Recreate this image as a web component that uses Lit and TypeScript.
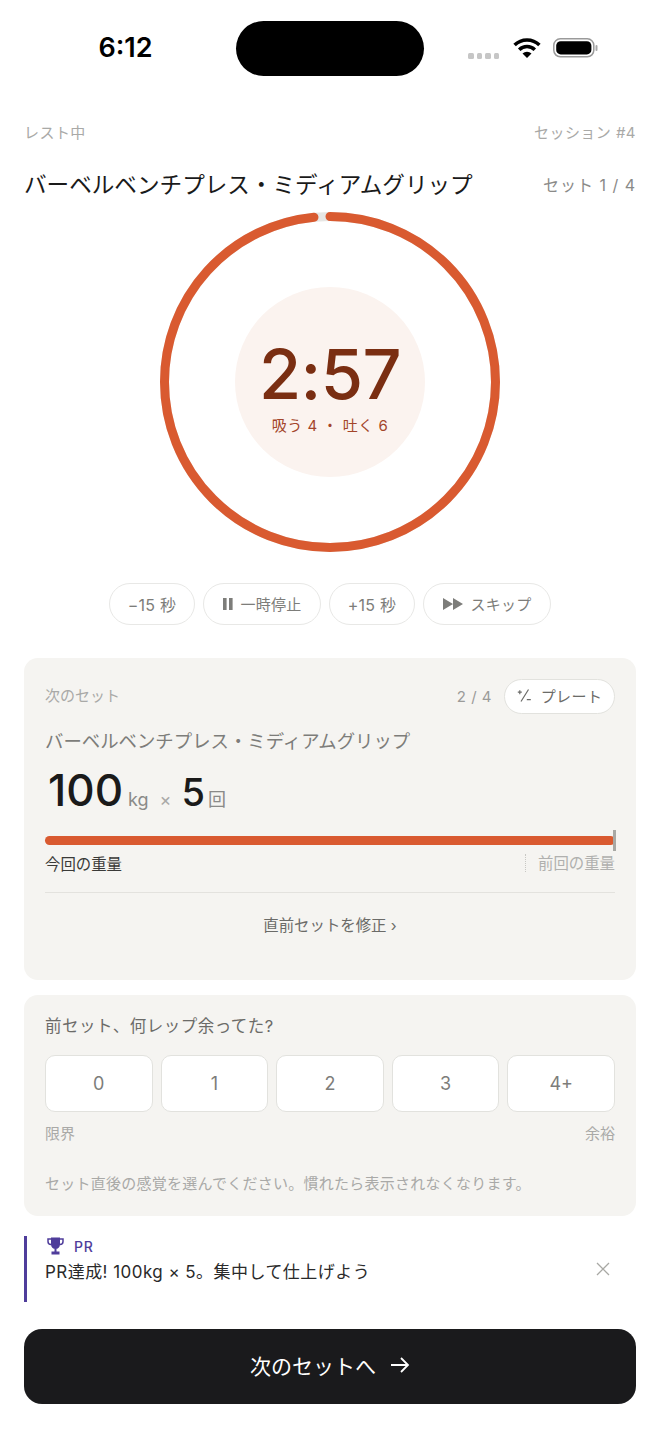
import { LitElement, html, css } from "lit";
import { customElement } from "lit/decorators.js";

@customElement("app-root")
export class AppRoot extends LitElement {
  static styles = css`
    :host {
      display: block;
      width: 660px;
      height: 1434px;
      background: #fff;
      overflow: hidden;
      font-family: Inter, "Noto Sans CJK JP", sans-serif;
      color: #1a1a1a;
    }
    * { box-sizing: border-box; }
    .status { position: relative; height: 114px; display: flex; align-items: flex-start; }
    .time { width: 251px; padding-top: 33px; text-align: center; font-size: 27px; line-height: 30px; font-weight: 600; color: #000; }
    .island { position: absolute; left: 236px; top: 21px; width: 188px; height: 55px; border-radius: 28px; background: #000; }
    .sys { position: absolute; left: 468px; top: 38px; display: flex; align-items: flex-start; }
    .dots { display: flex; gap: 3px; margin-top: 15px; margin-right: 14px; }
    .dots i { width: 5.5px; height: 5.5px; border-radius: 1.5px; background: #c6c6c6; }
    .wifi { margin-right: 12px; }
    .page { padding: 0 24px; }
    .row { display: flex; justify-content: space-between; align-items: center; }
    .top { height: 30px; font-size: 15px; color: #a9a9a7; padding-top: 5px; letter-spacing: .45px; }
    .titlerow { height: 30px; margin-top: 25px; }
    .title { font-size: 22.6px; line-height: 30px; padding-top: 1px; color: #1a1a1a; font-weight: 400; }
    .setno { font-size: 16px; color: #8a8a88; letter-spacing: 1px; }
    .ringwrap { position: relative; width: 340px; height: 340px; margin: 13px auto 0; }
    .ringwrap svg { display: block; }
    .center { position: absolute; left: 75px; top: 75px; width: 190px; height: 190px; border-radius: 50%; background: #fbf3ef; display: flex; flex-direction: column; align-items: center; }
    .clock { margin-top: 50px; font-size: 68.5px; letter-spacing: -.6px; line-height: 76px; font-weight: 450; color: #7a2e12; }
    .breath { font-size: 15px; line-height: 20px; margin-top: 3px; color: #a3452a; letter-spacing: 0.5px; white-space: pre; }
    .controls { display: flex; justify-content: center; gap: 8px; margin-top: 31px; }
    .pill { height: 42px; padding-bottom: 1px; border: 1px solid #e8e8e6; border-radius: 21px; background: #fff; display: flex; align-items: center; justify-content: center; gap: 8px; font-size: 15px; color: #7d7d7a; letter-spacing: .2px; }
    .wide { font-size: 16px; letter-spacing: .2px; }
    .card { background: #f5f4f1; border-radius: 14px; padding: 20px 21px 21px; }
    .c1 { margin-top: 33px; height: 322px; }
    .c2 { margin-top: 15px; height: 221px; }
    .cardhead { height: 36px; }
    .lbl { font-size: 15px; color: #a9a9a7; padding-bottom: 3px; }
    .headr { display: flex; align-items: center; gap: 12px; font-size: 15px; color: #9b9b99; letter-spacing: .5px; }
    .plate { width: 111px; height: 35px; padding-bottom: 2px; background: #fff; border: 1px solid #e2e2de; border-radius: 18px; display: flex; align-items: center; justify-content: center; gap: 9px; font-size: 15px; color: #6b6b68; letter-spacing: .4px; }
    .exname { margin-top: 13px; font-size: 18.4px; line-height: 28px; color: #7d7d7a; }
    .big { display: flex; align-items: baseline; margin-top: 8px; height: 54px; padding-left: 3px; }
    .n1 { font-size: 44px; line-height: 54px; font-weight: 450; color: #1a1a1a; }
    .n2 { font-size: 38px; line-height: 54px; font-weight: 450; color: #1a1a1a; }
    .u { font-size: 18px; color: #8a8a88; margin-left: 5px; }
    .n2 + .u { margin-left: 3px; }
    .x { font-size: 18px; color: #a9a9a7; margin: 0 10px 0 11px; }
    .barwrap { position: relative; height: 9px; margin-top: 19px; background: #d95a30; border-radius: 5px; }
    .tick { position: absolute; right: -1px; top: -6px; width: 3px; height: 21px; background: #a8a8a4; }
    .barlbl { margin-top: 6px; height: 24px; font-size: 15.4px; }
    .cur { color: #3a3a38; }
    .prev { color: #b0b0ae; border-left: 1px dotted #c8c8c4; padding-left: 12px; padding-top: 2px; line-height: 16px; }
    .div { height: 1px; background: #e3e2de; margin-top: 17px; }
    .fix { margin-top: 21px; text-align: center; font-size: 15.4px; line-height: 24px; color: #6b6b68; }
    .q { font-size: 16.5px; letter-spacing: .5px; line-height: 22px; color: #6b6b68; }
    .opts { display: grid; grid-template-columns: repeat(5, 1fr); gap: 8px; margin-top: 18px; }
    .opt { height: 57px; background: #fff; border: 1px solid #e2e2de; border-radius: 10px; display: flex; align-items: center; justify-content: center; font-size: 18px; color: #7d7d7a; }
    .ends { margin-top: 12px; font-size: 15px; line-height: 20px; color: #a9a9a7; }
    .hint { margin-top: 30px; font-size: 15px; letter-spacing: .25px; line-height: 20px; color: #a9a9a7; white-space: nowrap; }
    .alert { position: relative; margin-top: 20px; height: 66px; border-left: 3px solid #4f3d9b; padding-left: 18px; }
    .prhead { display: flex; align-items: center; gap: 10px; height: 20px; font-size: 14px; font-weight: 500; color: #4f3d9b; letter-spacing: .8px; }
    .prhead svg { margin-left: 2px; }
    .msg { font-size: 17px; letter-spacing: .45px; line-height: 25px; margin-top: 4px; color: #2a2a2a; }
    .close { position: absolute; right: 25px; top: 25px; }
    .cta { margin-top: 27px; height: 75px; padding-bottom: 3px; background: #1a1a1c; border-radius: 18px; display: flex; align-items: center; justify-content: center; gap: 14px; color: #fff; font-size: 21px; }
  `;

  render() {
    const r = 165.5, c = 2 * Math.PI * r;
    return html`
      <div class="status">
        <div class="time">6:12</div>
        <div class="island"></div>
        <div class="sys">
          <div class="dots"><i></i><i></i><i></i><i></i></div>
          <svg class="wifi" width="28" height="20" viewBox="0 0 28 20"><path d="M14 20L9.500 15.500A6.400 6.400 0 0 1 18.500 15.500z" fill="#000"/><path d="M6.200 11.700A11 11 0 0 1 21.800 11.700M1.600 7.100A17.500 17.500 0 0 1 26.400 7.100" fill="none" stroke="#000" stroke-width="3.500"/></svg>
          <svg width="45" height="20" viewBox="0 0 45 20"><rect x="0.800" y="0.800" width="40" height="18" rx="6.500" fill="none" stroke="#9a9a9a" stroke-width="1.500"/><rect x="3.200" y="3.200" width="35.200" height="13.200" rx="4.500" fill="#000"/><rect x="42.500" y="7" width="2" height="6" rx="1" fill="#a8a8a8"/></svg>
        </div>
      </div>
      <div class="page">
        <div class="row top"><span>レスト中</span><span>セッション #4</span></div>
        <div class="row titlerow"><span class="title">バーベルベンチプレス・ミディアムグリップ</span><span class="setno">セット 1 / 4</span></div>
        <div class="ringwrap">
          <svg width="340" height="340" viewBox="0 0 340 340">
            <circle cx="170" cy="170" r="${r}" fill="none" stroke="#e6e6e4" stroke-width="9"/>
            <circle cx="170" cy="170" r="${r}" fill="none" stroke="#d95a30" stroke-width="9" stroke-linecap="round"
              stroke-dasharray="${c - 16.5} ${c}" transform="rotate(-90 170 170)"/>
          </svg>
          <div class="center">
            <div class="clock">2:57</div>
            <div class="breath">吸う 4 ・ 吐く 6</div>
          </div>
        </div>
        <div class="controls">
          <div class="pill wide" style="width:86px">−15 秒</div>
          <div class="pill" style="width:118px"><svg width="10" height="12" viewBox="0 0 10 12"><rect x="0" y="0" width="3.600" height="12" fill="#7d7d7a"/><rect x="6" y="0" width="3.600" height="12" fill="#7d7d7a"/></svg>一時停止</div>
          <div class="pill wide" style="width:86px">+15 秒</div>
          <div class="pill" style="width:128px"><svg width="20" height="12" viewBox="0 0 20 12"><path d="M0 0l10 6-10 6zM10 0l10 6-10 6z" fill="#7d7d7a"/></svg>スキップ</div>
        </div>
        <div class="card c1">
          <div class="row cardhead">
            <span class="lbl">次のセット</span>
            <span class="headr">2 / 4
              <span class="plate"><svg width="15" height="15" viewBox="0 0 15 15" fill="none" stroke="#6b6b68" stroke-width="1.200"><path d="M11.500 1.500L4 13.500M0.800 4.200h4M2.800 2.200v4M9.800 11.700h4"/></svg>プレート</span>
            </span>
          </div>
          <div class="exname">バーベルベンチプレス・ミディアムグリップ</div>
          <div class="big"><span class="n1">100</span><span class="u">kg</span><span class="x">×</span><span class="n2">5</span><span class="u">回</span></div>
          <div class="barwrap"><div class="tick"></div></div>
          <div class="row barlbl"><span class="cur">今回の重量</span><span class="prev">前回の重量</span></div>
          <div class="div"></div>
          <div class="fix">直前セットを修正 ›</div>
        </div>
        <div class="card c2">
          <div class="q">前セット、何レップ余ってた?</div>
          <div class="opts"><div class="opt">0</div><div class="opt">1</div><div class="opt">2</div><div class="opt">3</div><div class="opt">4+</div></div>
          <div class="row ends"><span>限界</span><span>余裕</span></div>
          <div class="hint">セット直後の感覚を選んでください。慣れたら表示されなくなります。</div>
        </div>
        <div class="alert">
          <div class="prhead"><svg width="17" height="18" viewBox="0 0 17 18"><path d="M4 0.500h9v7a4.500 4.500 0 0 1-9 0zM7.500 11.500h2v3h-2zM4.500 14.500h8v3h-8z" fill="#4f3d9b"/><path d="M4 2H1v2.500A3 3 0 0 0 4 7.500M13 2h3v2.500A3 3 0 0 1 13 7.500" fill="none" stroke="#4f3d9b" stroke-width="1.500"/></svg>PR</div>
          <div class="msg">PR達成! 100kg × 5。集中して仕上げよう</div>
          <svg class="close" width="16" height="16" viewBox="0 0 16 16" stroke="#a8a8a4" stroke-width="1.300"><path d="M2 2l12 12M14 2L2 14"/></svg>
        </div>
        <div class="cta">次のセットへ<svg width="20" height="18" viewBox="0 0 20 18" fill="none" stroke="#fff" stroke-width="1.800"><path d="M1 9h17M11 2l7 7-7 7"/></svg></div>
      </div>
    `;
  }
}
